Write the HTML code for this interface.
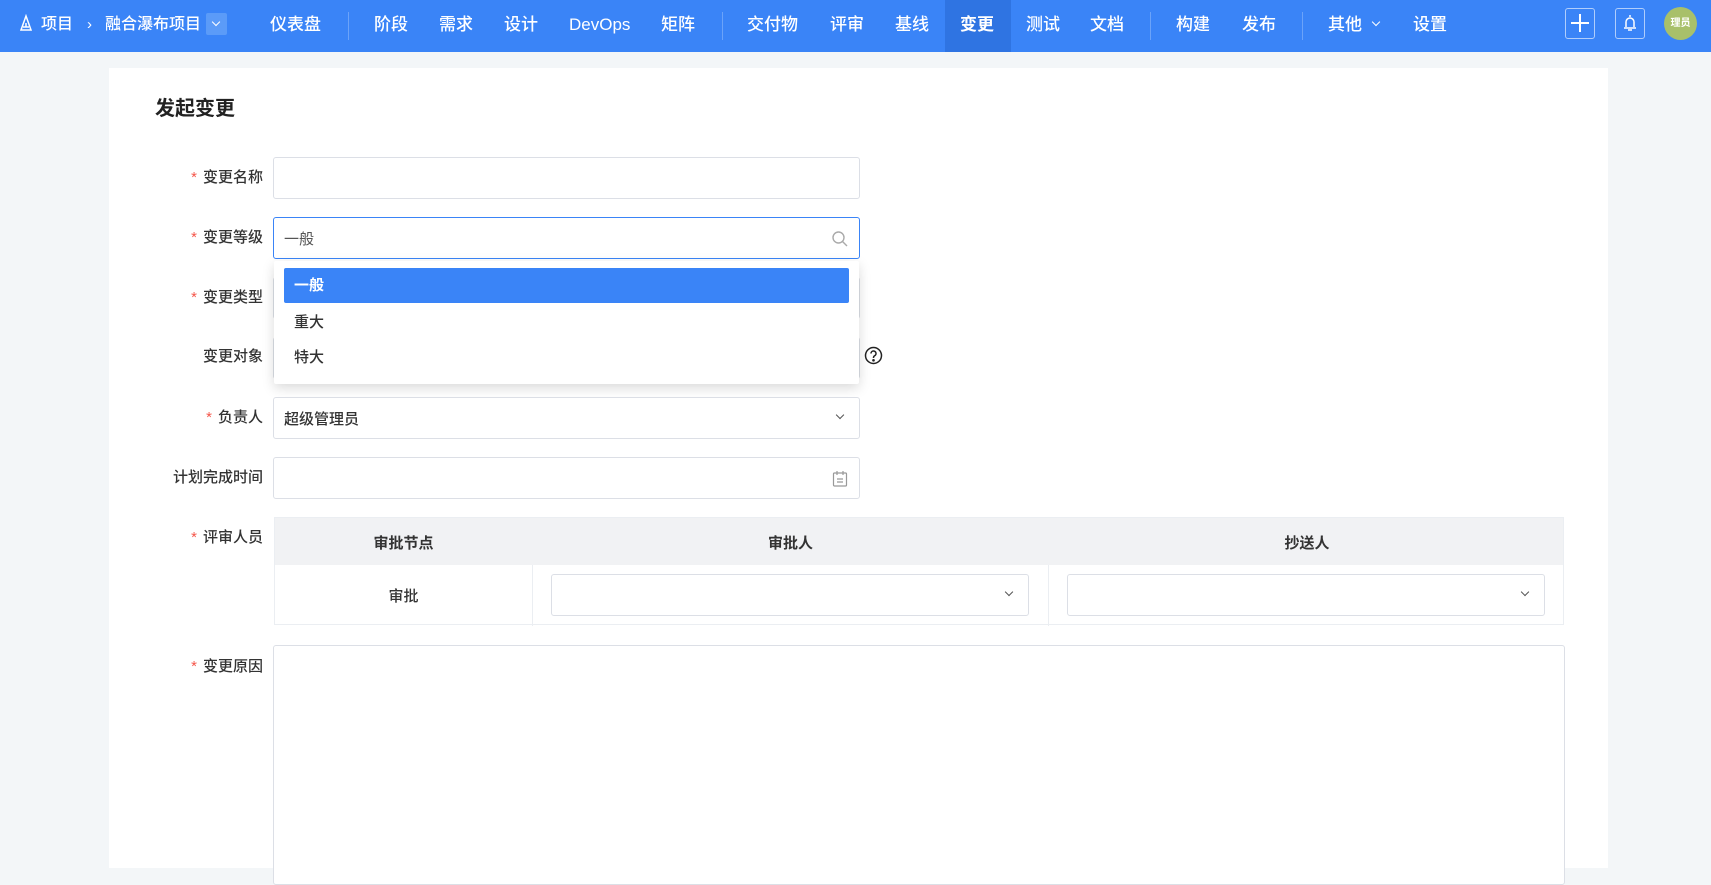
<!DOCTYPE html>
<html><head><meta charset="utf-8"><style>
*{box-sizing:border-box;margin:0;padding:0}
body{width:1711px;height:858px;overflow:hidden;background:#f3f6f8;font-family:"Liberation Sans","Noto Sans CJK SC",sans-serif;color:#333;position:relative}
.nav{position:absolute;left:0;top:0;width:1711px;height:52px;background:#3a84f7}
.nav span{position:absolute;top:13px;color:#fff;font-size:17px;line-height:24px;white-space:nowrap;font-weight:500}
.sep{position:absolute;top:12px;width:1px;height:28px;background:rgba(255,255,255,.25)}
.card{position:absolute;left:109px;top:68px;width:1499px;height:800px;background:#fff}
.lbl{position:absolute;right:1448px;font-size:15px;color:#333;white-space:nowrap;line-height:20px;font-weight:500}
.lbl i{color:#f5564a;font-style:normal;margin-right:6px}
.in{position:absolute;background:#fff;border:1px solid #dcdfe6;border-radius:3px}
.chev{position:absolute;width:7px;height:7px;border-right:1.3px solid #555;border-bottom:1.3px solid #555;transform:rotate(45deg)}
</style></head><body>
<div class="nav">
<svg style="position:absolute;left:18px;top:14px" width="16" height="20" viewBox="0 0 16 20" fill="none" stroke="#fff" stroke-width="1.5"><path d="M8 2 L3 16 H13 Z M5 13 h6 M8 9 v4"/></svg>
<span style="left:41px;font-size:16px">项目</span>
<span style="left:87px;font-size:15px">›</span>
<span style="left:105px;font-size:16px">融合瀑布项目</span>
<div style="position:absolute;left:206px;top:13px;width:21px;height:22px;background:#5b9bf8;border-radius:2px"></div>
<div class="chev" style="left:213px;top:19px;border-color:#fff;width:6px;height:6px"></div>
<span style="left:270px">仪表盘</span>
<div class="sep" style="left:348px"></div>
<span style="left:374px">阶段</span><span style="left:439px">需求</span><span style="left:504px">设计</span><span style="left:569px">DevOps</span><span style="left:661px">矩阵</span>
<div class="sep" style="left:722px"></div>
<span style="left:747px">交付物</span><span style="left:830px">评审</span><span style="left:895px">基线</span>
<div style="position:absolute;left:945px;top:0;width:66px;height:52px;background:#2f74e2"></div>
<span style="left:960px;font-weight:bold">变更</span><span style="left:1026px">测试</span><span style="left:1090px">文档</span>
<div class="sep" style="left:1150px"></div>
<span style="left:1176px">构建</span><span style="left:1242px">发布</span>
<div class="sep" style="left:1302px"></div>
<span style="left:1328px">其他</span>
<div class="chev" style="left:1373px;top:19px;border-color:#fff;width:6px;height:6px;border-width:1px"></div>
<span style="left:1413px">设置</span>
<div style="position:absolute;left:1565px;top:8px;width:30px;height:31px;border:1px solid rgba(255,255,255,.6);border-radius:3px"></div>
<div style="position:absolute;left:1571px;top:22px;width:18px;height:2px;background:#fff"></div>
<div style="position:absolute;left:1579px;top:14px;width:2px;height:18px;background:#fff"></div>
<div style="position:absolute;left:1615px;top:8px;width:30px;height:31px;border:1px solid rgba(255,255,255,.6);border-radius:3px"></div>
<svg style="position:absolute;left:1621px;top:13px" width="18" height="20" viewBox="0 0 18 20" fill="none" stroke="#fff" stroke-width="1.5"><path d="M9 2v2 M5 14 V9 a4 4 0 0 1 8 0 V14 M3 15 H15 M7 17 h4"/></svg>
<div style="position:absolute;left:1664px;top:7px;width:33px;height:33px;border-radius:50%;background:#a8c06a;color:#fff;font-size:10px;font-weight:bold;text-align:center;line-height:33px">理员</div>
</div>
<div class="card"></div>
<div style="position:absolute;left:155px;top:92px;font-size:20px;font-weight:bold;color:#222">发起变更</div>

<div class="lbl" style="top:168px"><i>*</i>变更名称</div>
<div class="in" style="left:273px;top:157px;width:587px;height:42px"></div>
<div class="lbl" style="top:228px"><i>*</i>变更等级</div>
<div class="in" style="left:273px;top:217px;width:587px;height:42px;border-color:#3a84f7"><span style="position:absolute;left:10px;top:10px;font-size:15px;color:#555">一般</span>
<svg style="position:absolute;right:10px;top:12px" width="18" height="18" viewBox="0 0 18 18" fill="none" stroke="#aaa" stroke-width="1.4"><circle cx="7.5" cy="7.5" r="5.5"/><path d="M11.5 11.5 L16 16"/></svg></div>
<div class="lbl" style="top:288px"><i>*</i>变更类型</div>
<div class="in" style="left:273px;top:277px;width:587px;height:42px"></div>
<div class="lbl" style="top:347px">变更对象</div>
<div class="in" style="left:273px;top:337px;width:587px;height:42px"></div>
<svg style="position:absolute;left:864px;top:346px" width="19" height="19" viewBox="0 0 19 19" fill="none" stroke="#222" stroke-width="1.5"><circle cx="9.5" cy="9.5" r="8"/><path d="M7 7.5a2.5 2.5 0 1 1 3.5 2.3c-.7.4-1 .9-1 1.7v.5"/><circle cx="9.5" cy="14.3" r=".6" fill="#222"/></svg>
<div style="position:absolute;left:274px;top:261px;width:585px;height:123px;background:#fff;box-shadow:0 4px 12px rgba(0,0,0,.15);border-radius:2px">
<div style="position:absolute;left:10px;top:7px;width:565px;height:35px;background:#3a84f7;border-radius:2px;color:#fff;font-size:15px;font-weight:bold;line-height:35px;padding-left:10px">一般</div>
<div style="position:absolute;left:20px;top:50px;font-size:15px;color:#333;font-weight:500">重大</div>
<div style="position:absolute;left:20px;top:85px;font-size:15px;color:#333;font-weight:500">特大</div>
</div>

<div class="lbl" style="top:408px"><i>*</i>负责人</div>
<div class="in" style="left:273px;top:397px;width:587px;height:42px"><span style="position:absolute;left:10px;top:10px;font-size:15px;color:#333;font-weight:500">超级管理员</span><div class="chev" style="right:16px;top:14px;width:6px;height:6px"></div></div>
<div class="lbl" style="top:468px">计划完成时间</div>
<div class="in" style="left:273px;top:457px;width:587px;height:42px">
<svg style="position:absolute;right:11px;top:12px" width="16" height="18" viewBox="0 0 16 18" fill="none" stroke="#999" stroke-width="1.2"><rect x="1.5" y="3" width="13" height="13" rx="1"/><path d="M5 1v4 M11 1v4 M5 9h6 M5 12h6"/></svg></div>

<div class="lbl" style="top:528px"><i>*</i>评审人员</div>
<div style="position:absolute;left:274px;top:517px;width:1290px;height:108px;border:1px solid #ebeef2">
<div style="position:absolute;left:0;top:0;width:100%;height:47px;background:#f1f2f4"></div>
<div style="position:absolute;left:0;top:14px;width:257px;text-align:center;font-size:15px;font-weight:bold">审批节点</div>
<div style="position:absolute;left:257px;top:14px;width:517px;text-align:center;font-size:15px;font-weight:bold">审批人</div>
<div style="position:absolute;left:774px;top:14px;width:516px;text-align:center;font-size:15px;font-weight:bold">抄送人</div>
<div style="position:absolute;left:257px;top:47px;width:1px;height:61px;background:#ebeef2"></div>
<div style="position:absolute;left:773px;top:47px;width:1px;height:61px;background:#ebeef2"></div>
<div style="position:absolute;left:0;top:67px;width:257px;text-align:center;font-size:15px;font-weight:500">审批</div>
<div class="in" style="left:276px;top:56px;width:478px;height:42px"><div class="chev" style="right:16px;top:14px;width:6px;height:6px"></div></div>
<div class="in" style="left:792px;top:56px;width:478px;height:42px"><div class="chev" style="right:16px;top:14px;width:6px;height:6px"></div></div>
</div>

<div class="lbl" style="top:657px"><i>*</i>变更原因</div>
<div class="in" style="left:273px;top:645px;width:1292px;height:240px"></div>
</body></html>
